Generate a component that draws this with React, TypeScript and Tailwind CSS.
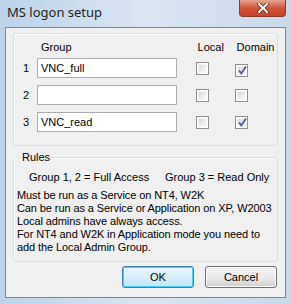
import React from 'react';

const Check = ({ checked }: { checked?: boolean }) => (
  <div className="w-[13px] h-[13px] border border-[#8f8f8f] bg-white p-px">
    <div className="relative w-full h-full border border-[#f4f4f4] bg-gradient-to-br from-[#d8d8d8] to-[#fbfbfb]">
      {checked && (
        <svg className="absolute left-[-1px] top-[-2px]" width="11" height="11" viewBox="0 0 11 11">
          <path d="M2 5.5 L4.3 8.5 L9 1.5" fill="none" stroke="#4a5f97" strokeWidth="1.8" />
        </svg>
      )}
    </div>
  </div>
);

const Row = ({ n, value, local, domain, low }: { n: string; value: string; local?: boolean; domain?: boolean; low?: boolean }) => (
  <div className="flex items-center h-[20px]">
    <span className="w-[14px]">{n}</span>
    <div className="w-[140px] h-[20px] border border-[#abadb3] bg-white px-[3px] flex items-center">
      {value}
    </div>
    <div className="ml-[19px]"><Check checked={local} /></div>
    <div className={low ? 'ml-[26px] mt-[4px]' : 'ml-[26px]'}><Check checked={domain} /></div>
  </div>
);

export default function App() {
  return (
    <div
      className="w-[291px] h-[304px] flex flex-col bg-gradient-to-r from-[#bcd3ea] via-[#d9e6f2] to-[#c7d9ec] text-[11px] text-black"
      style={{ fontFamily: '"Liberation Sans", Arial, sans-serif' }}
    >
      {/* title bar */}
      <div className="h-[27px] flex items-start justify-between pl-[7px] pr-[5px]">
        <span className="mt-[3px] text-[13px] text-[#1e1e1e]" style={{ fontFamily: '"Noto Sans", sans-serif' }}>
          MS logon setup
        </span>
        <div className="w-[47px] h-[17px] rounded-b-[4px] border border-t-0 border-[#8d3a2b] bg-gradient-to-b from-[#e8a493] via-[#d0543a] to-[#c6432a] flex items-center justify-center">
          <svg width="12" height="10" viewBox="0 0 12 10">
            <path d="M2 1 L10 9 M10 1 L2 9" stroke="#5a2a20" strokeWidth="3.4" strokeLinecap="square" />
            <path d="M2 1 L10 9 M10 1 L2 9" stroke="#ffffff" strokeWidth="2" strokeLinecap="square" />
          </svg>
        </div>
      </div>

      {/* client area */}
      <div className="mx-[5px] h-[271px] border border-[#7b8794] bg-[#f0f0f0] px-[7px] pt-[5px] flex flex-col">
        {/* groups box */}
        <div className="h-[113px] rounded-[3px] border border-[#d5dfe5] shadow-[inset_1px_1px_0_#fff] pl-[9px] pt-[7px] flex flex-col">
          <div className="flex h-[13px] items-center">
            <span className="ml-[18px]">Group</span>
            <span className="ml-[126px] w-[39px]">Local</span>
            <span>Domain</span>
          </div>
          <div className="mt-[4px] flex flex-col gap-[7px]">
            <Row n="1" value="VNC_full" domain low />
            <Row n="2" value="" />
            <Row n="3" value="VNC_read" domain />
          </div>
        </div>

        {/* rules box */}
        <div className="relative mt-[11px] h-[105px] rounded-[3px] border border-[#d5dfe5] shadow-[inset_1px_1px_0_#fff] pl-[3px] pt-[13px] leading-[13px]">
          <span className="absolute left-[7px] top-[-7px] bg-[#f0f0f0] px-[1px]">Rules</span>
          <div className="flex pl-[12px]">
            <span className="w-[136px]">Group 1, 2 = Full Access</span>
            <span>Group 3 = Read Only</span>
          </div>
          <div className="mt-[5px] tracking-[-0.1px]">
            <div>Must be run as a Service on NT4, W2K</div>
            <div>Can be run as a Service or Application on XP, W2003</div>
            <div>Local admins have always access.</div>
            <div>For NT4 and W2K in Application mode you need to</div>
            <div>add the Local Admin Group.</div>
          </div>
        </div>

        {/* buttons */}
        <div className="mt-[4px] flex justify-end gap-[11px] pr-[1px]">
          <button className="w-[72px] h-[22px] rounded-[3px] border border-[#3c7fb1] shadow-[inset_0_0_0_1px_#48d0f6] bg-gradient-to-b from-[#eaf6fd] via-[#d9f0fc] to-[#bee6fd]">
            OK
          </button>
          <button className="w-[72px] h-[22px] rounded-[3px] border border-[#707070] shadow-[inset_0_0_0_1px_#fcfcfc] bg-gradient-to-b from-[#f2f2f2] via-[#ebebeb] to-[#cfcfcf]">
            Cancel
          </button>
        </div>
      </div>
    </div>
  );
}
